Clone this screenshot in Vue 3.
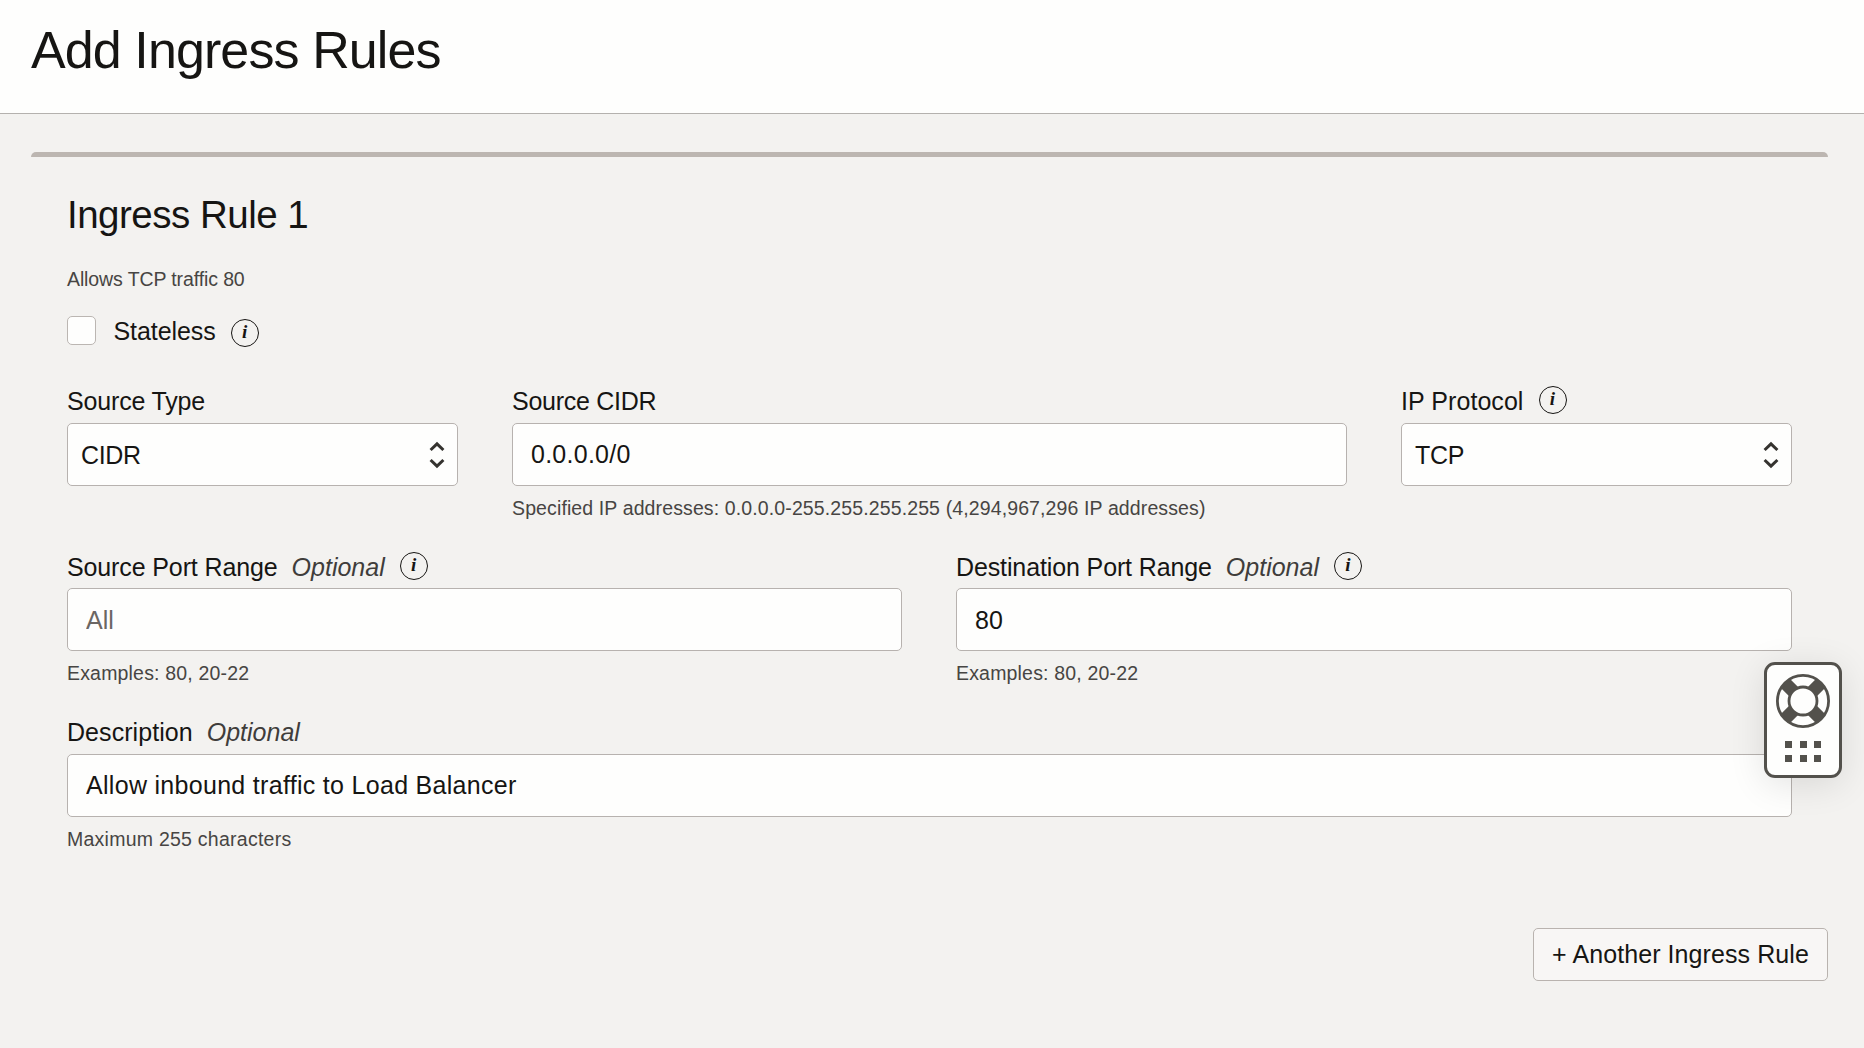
<script setup>
import { ref } from 'vue'

const stateless = ref(false)
const sourceCidr = ref('0.0.0.0/0')
const sourcePort = ref('')
const destinationPort = ref('80')
const description = ref('Allow inbound traffic to Load Balancer')
</script>

<template>
  <div class="page">
    <header class="header">
      <h1>Add Ingress Rules</h1>
    </header>

    <main class="content">
      <section class="rule">
        <h2>Ingress Rule 1</h2>
        <p class="summary">Allows TCP traffic 80</p>

        <div class="check-row">
          <input v-model="stateless" type="checkbox" class="checkbox" aria-label="Stateless" />
          <span class="check-label">Stateless</span>
          <span class="info check-info">i</span>
        </div>

        <div class="row row-three">
          <div class="field">
            <div class="label"><span class="name type-name">Source Type</span></div>
            <div class="box select">
              <span class="cidr-value">CIDR</span>
              <svg class="arrows" width="16" height="28" viewBox="0 0 16 28">
                <path d="M1.6 9 8 2.8 14.4 9M1.6 19 8 25.2 14.4 19" />
              </svg>
            </div>
          </div>
          <div class="field">
            <div class="label"><span class="name cidr-name">Source CIDR</span></div>
            <input v-model="sourceCidr" class="box cidr" />
            <div class="hint range">Specified IP addresses: 0.0.0.0-255.255.255.255 (4,294,967,296 IP addresses)</div>
          </div>
          <div class="field">
            <div class="label"><span class="name protocol-name">IP Protocol</span><span class="info">i</span></div>
            <div class="box select">
              <span class="tcp-value">TCP</span>
              <svg class="arrows" width="16" height="28" viewBox="0 0 16 28">
                <path d="M1.6 9 8 2.8 14.4 9M1.6 19 8 25.2 14.4 19" />
              </svg>
            </div>
          </div>
        </div>

        <div class="row row-two">
          <div class="field">
            <div class="label">
              <span class="name">Source Port Range</span><em>Optional</em><span class="info">i</span>
            </div>
            <input v-model="sourcePort" class="box" placeholder="All" />
            <div class="hint">Examples: 80, 20-22</div>
          </div>
          <div class="field">
            <div class="label">
              <span class="name">Destination Port Range</span><em>Optional</em><span class="info">i</span>
            </div>
            <input v-model="destinationPort" class="box" />
            <div class="hint">Examples: 80, 20-22</div>
          </div>
        </div>

        <div class="row row-one">
          <div class="field">
            <div class="label"><span class="name description-name">Description</span><em>Optional</em></div>
            <input v-model="description" class="box description" />
            <div class="hint limit">Maximum 255 characters</div>
          </div>
        </div>
      </section>

      <div class="actions">
        <button class="add">+ Another Ingress Rule</button>
      </div>
    </main>

    <aside class="help">
      <svg width="54" height="54" viewBox="0 0 54 54">
        <path class="spokes" d="M9.5 9.5 17.5 17.5M44.5 9.5 36.5 17.5M9.5 44.5 17.5 36.5M44.5 44.5 36.5 36.5" />
        <circle cx="27" cy="27" r="25.6" />
        <circle cx="27" cy="27" r="14" />
      </svg>
      <div class="dots"><i v-for="n in 6" :key="n"></i></div>
    </aside>
  </div>
</template>

<style>
html,
body {
  background: #f3f2f0;
}
</style>

<style scoped>
.page {
  position: relative;
  box-sizing: border-box;
  width: 1864px;
  height: 1048px;
  overflow: hidden;
  background: #f3f2f0;
  color: #161513;
  font-family: "Liberation Sans", Arial, sans-serif;
  font-size: 25px;
}
.header {
  box-sizing: border-box;
  height: 114px;
  padding: 20px 31px 0;
  background: #fefefd;
  border-bottom: 1px solid #b4b1ae;
}
h1,
h2,
p {
  margin: 0;
  font-weight: 400;
}
h1 {
  font-size: 52px;
  line-height: 60px;
  letter-spacing: -0.9px;
}
.content {
  padding: 38px 36px 0 31px;
}
.rule {
  padding: 35px 36px 0;
  border-top: 5px solid #bcb6b1;
  border-radius: 5px 5px 0 0;
}
h2 {
  font-size: 38.5px;
  line-height: 46px;
  letter-spacing: -0.5px;
}
.summary,
.hint {
  font-size: 19.5px;
  line-height: 24px;
  color: #474543;
}
.summary {
  margin-top: 29px;
  letter-spacing: -0.11px;
}
.check-row {
  display: flex;
  height: 29px;
  margin-top: 25px;
}
.checkbox {
  appearance: none;
  box-sizing: border-box;
  width: 29px;
  height: 29px;
  margin: 0;
  background: #fefefd;
  border: 1px solid #bbb6b2;
  border-radius: 5px;
}
.check-label {
  margin-left: 17.5px;
  line-height: 31px;
  letter-spacing: -0.08px;
}
.info {
  flex: none;
  box-sizing: border-box;
  width: 28px;
  height: 28px;
  margin-left: 15px;
  border: 1.5px solid #161513;
  border-radius: 50%;
  font: italic bold 19px/24px "Liberation Serif", serif;
  letter-spacing: 0;
  text-align: center;
}
.check-info {
  margin-top: 3px;
}
.row {
  display: grid;
  column-gap: 54px;
}
.row-three {
  grid-template-columns: 391px 1fr 391px;
  margin-top: 41px;
}
.row-two {
  grid-template-columns: 835px 1fr;
  margin-top: 31px;
}
.row-one {
  margin-top: 32px;
}
.label {
  display: flex;
  height: 30px;
  margin-bottom: 7px;
  line-height: 31px;
  white-space: nowrap;
}
.row-two .label {
  box-sizing: border-box;
  padding-top: 1px;
}
.name {
  letter-spacing: -0.12px;
}
.type-name {
  letter-spacing: -0.17px;
}
.cidr-name {
  letter-spacing: -0.27px;
}
.protocol-name,
.description-name {
  letter-spacing: 0.06px;
}
.label em {
  margin-left: 14px;
  color: #3f3d3b;
}
.box {
  display: block;
  box-sizing: border-box;
  width: 100%;
  height: 63px;
  padding: 0 18px;
  background: #fefefd;
  border: 1px solid #b7b2af;
  border-radius: 5px;
  color: #161513;
  font: inherit;
  outline: none;
}
.row-two .box {
  padding-top: 2px;
}
.box::placeholder {
  color: #6b6663;
  opacity: 1;
}
.cidr {
  letter-spacing: 0.26px;
}
.description {
  letter-spacing: 0.3px;
}
.select {
  display: flex;
  align-items: center;
  justify-content: space-between;
  padding: 1px 12px 0 13px;
}
.cidr-value,
.tcp-value {
  letter-spacing: -0.35px;
}
.arrows {
  fill: none;
  stroke: #35332f;
  stroke-width: 3;
}
.hint {
  margin-top: 10px;
  letter-spacing: 0.18px;
  white-space: nowrap;
}
.range {
  letter-spacing: 0.12px;
}
.limit {
  letter-spacing: 0.25px;
}
.actions {
  display: flex;
  justify-content: flex-end;
  margin-top: 77px;
}
.add {
  width: 295px;
  height: 53px;
  padding: 0;
  background: #f8f6f5;
  border: 1px solid #b9b3af;
  border-radius: 5px;
  color: #161513;
  font: inherit;
  letter-spacing: 0.08px;
}
.help {
  position: absolute;
  top: 662px;
  left: 1764px;
  box-sizing: border-box;
  width: 78px;
  height: 116px;
  padding-top: 9px;
  background: #fefefd;
  border: 3px solid #53514c;
  border-radius: 11px;
  box-shadow: 0 6px 36px rgba(0, 0, 0, 0.11);
}
.help svg {
  display: block;
  margin: 0 auto;
  fill: none;
  stroke: #53514c;
  stroke-width: 2.8;
}
.help .spokes {
  stroke-width: 13;
}
.dots {
  display: grid;
  grid-template-columns: repeat(3, 7px);
  gap: 7px 7.5px;
  justify-content: center;
  margin-top: 13px;
}
.dots i {
  height: 7px;
  background: #53514c;
}
</style>
